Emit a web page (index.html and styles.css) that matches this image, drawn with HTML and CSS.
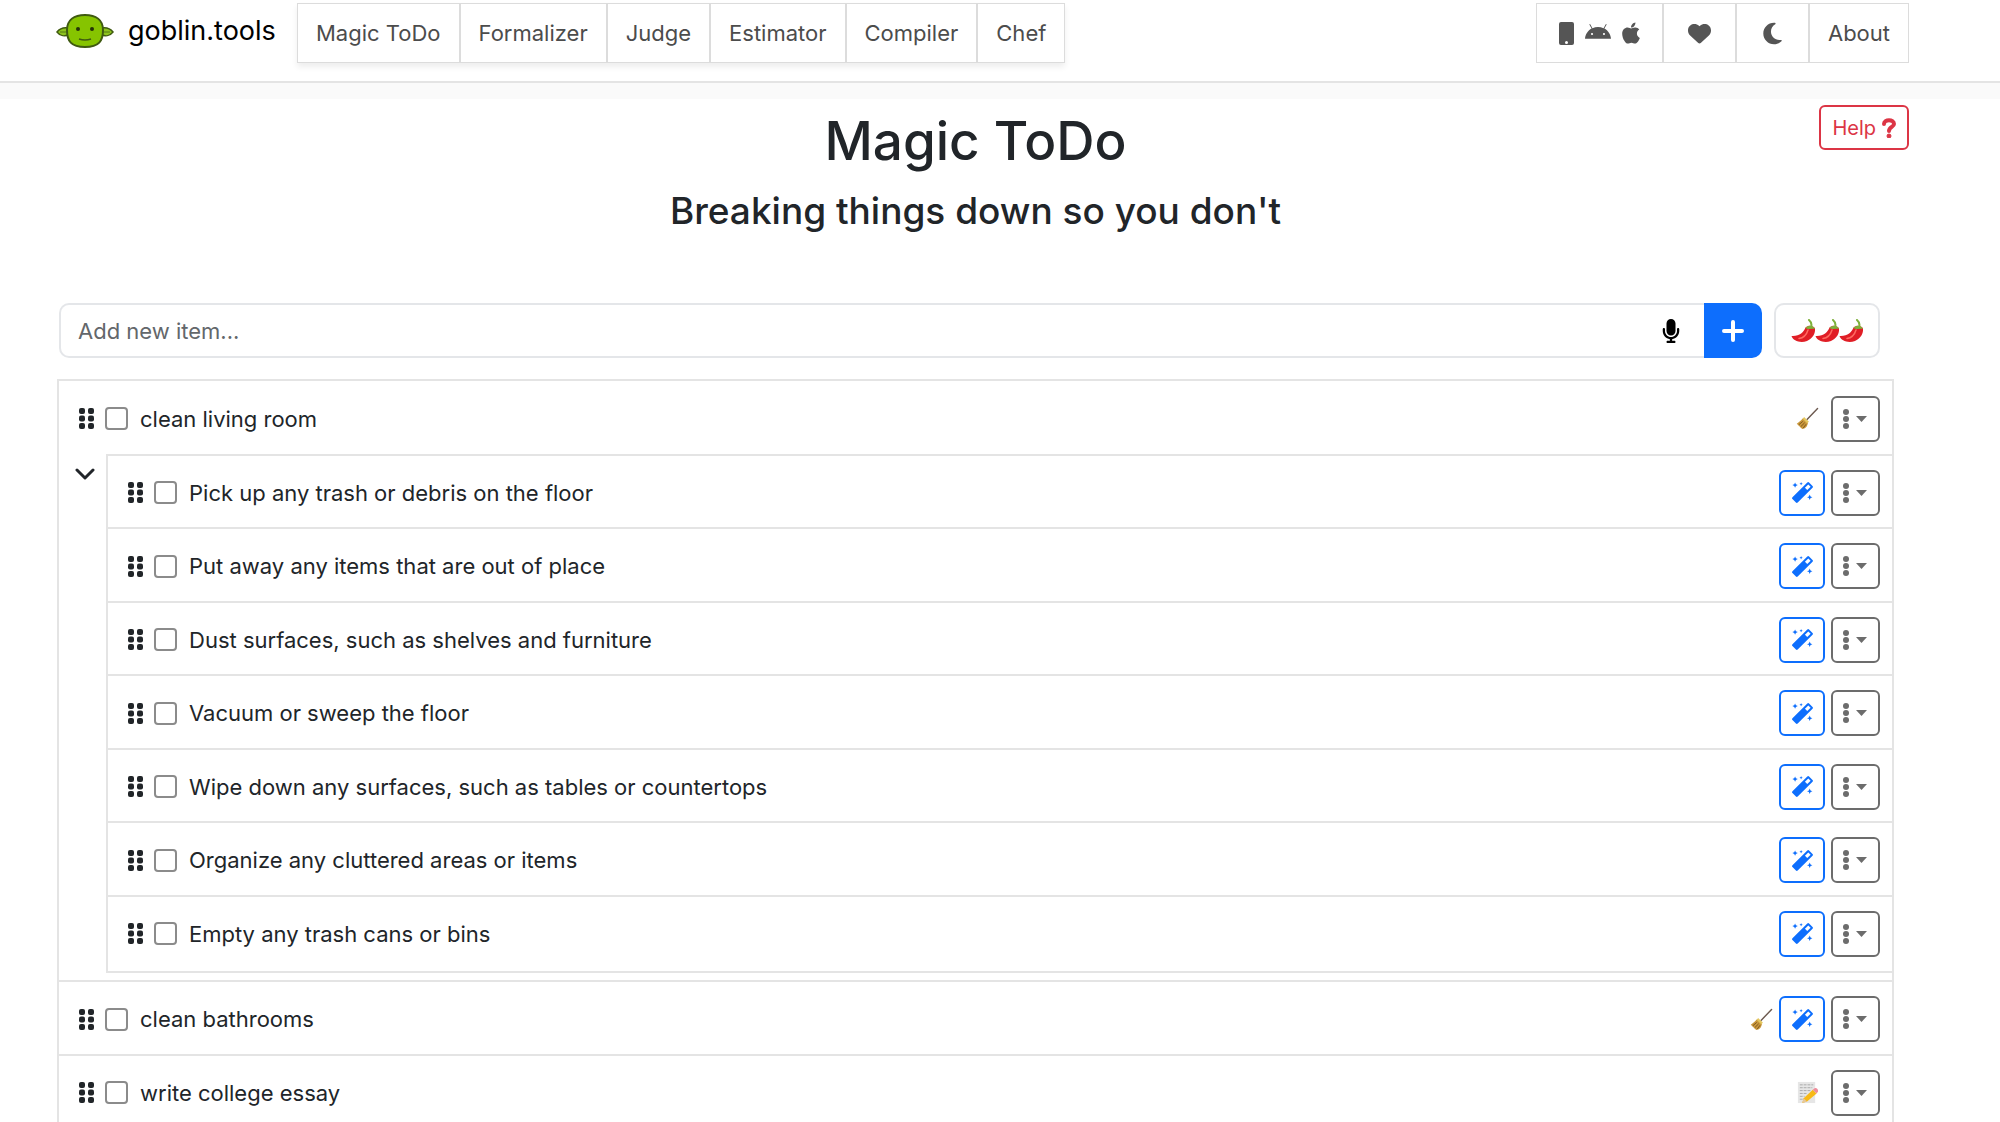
FILE: index.html
```
<!DOCTYPE html>
<html lang="en">
<head>
	<meta charset="utf-8">
	<title>Magic ToDo</title>
	<link rel="stylesheet" href="styles.css">
</head>
<body>
	<!-- shared icons -->
	<svg class="sprite" aria-hidden="true">
		<symbol id="i-grip" viewBox="0 0 15 21">
			<rect x="0" y="0" width="6" height="6" rx="2"/><rect x="9" y="0" width="6" height="6" rx="2"/>
			<rect x="0" y="7.500" width="6" height="6" rx="2"/><rect x="9" y="7.500" width="6" height="6" rx="2"/>
			<rect x="0" y="15" width="6" height="6" rx="2"/><rect x="9" y="15" width="6" height="6" rx="2"/>
		</symbol>
		<symbol id="i-wand" viewBox="0 0 512 512">
			<path transform="rotate(-45 256 256)" fill-rule="evenodd" d="M0 166H512a30 30 0 0 1 30 30V316a30 30 0 0 1-30 30H0a30 30 0 0 1-30-30V196a30 30 0 0 1 30-30zM380 216V296H496V216z"/>
			<path d="M75 10l20 46 46 20-46 20-20 46-20-46-46-20 46-20zM222 0l12 28 28 12-28 12-12 28-12-28-28-12 28-12zM432 306l20 46 46 20-46 20-20 46-20-46-46-20 46-20z"/>
		</symbol>
		<symbol id="i-menu" viewBox="0 0 25 22">
			<circle cx="3" cy="4" r="3"/><circle cx="3" cy="11" r="3"/><circle cx="3" cy="18" r="3"/>
			<path d="M13 8h11l-5.500 6z"/>
		</symbol>
		<symbol id="i-broom" viewBox="0 0 24 24">
			<path d="M22.500 1.500L11.500 13" stroke="#6d5a50" stroke-width="1.500" stroke-linecap="round"/>
			<path d="M7.500 11.500l5 5c-.5 4-3 6.500-6 6.500L.8 17.500c1.700-1 4-3 6.700-6z" fill="#c9973a"/>
			<path d="M8.500 10.500l5 5-1.800 1.500-4.700-4.700z" fill="#e4c75f"/>
			<path d="M3 18.500l4-3.500M5 20.500l4-4M7.500 22l3-4" stroke="#7b5520" stroke-width="1"/>
		</symbol>
		<symbol id="i-memo" viewBox="0 0 24 24">
			<path d="M2 1h18v22H2z" fill="#e6e6e6"/>
			<path d="M4 4h14M4 7h13M4 10h11M4 13h7M4 16h5M4 19h4" stroke="#a9a9a9" stroke-width="1" stroke-dasharray="3 1"/>
			<path d="M17.500 9l4 4-10 8.500-5 1.500 1.500-5z" fill="#f7b916"/>
			<path d="M8 18l3.500 3.500-5 1.500z" fill="#e5c79b"/>
			<path d="M17.500 9l2-1.500c2-.5 4 1.500 3.500 3.500l-1.500 2z" fill="#ef8d9b"/>
		</symbol>
		<symbol id="i-chili" viewBox="0 0 24 24">
			<path d="M14.500 8.500c-2 5-6 9-14 8.500 1.500 5 9 7.500 15.500 5 6-2.500 8.500-8 8-12.500-1.500-2.500-6-4-9.500-1z" fill="#e01e26"/>
			<path d="M17 11c-1.500 5-5 8-9 8.500" stroke="#ff6b61" stroke-width="1.500" fill="none" stroke-linecap="round"/>
			<path d="M14.500 9c2-3 7-3.500 9.500.5-2 .8-3 0-4 .3-1.500.5-4 0-5.500-.8z" fill="#7eb13b"/>
			<path d="M20 8.500c1-3 1-5-2-7.500" stroke="#7eb13b" stroke-width="2" fill="none" stroke-linecap="round"/>
		</symbol>
	</svg>

	<header class="topbar">
		<a class="brand" href="#">
			<svg class="logo" viewBox="0 0 58 34" aria-hidden="true">
				<path d="M13 14C8 13 4 14 1 18c3 4 8 5 13 2zM45 14c5-1 9 0 12 4-3 4-8 5-13 2z" fill="#8dc41e" stroke="#3f5a10" stroke-width="1.500"/>
				<path d="M4 18h8M54 18h-8" stroke="#557a12" stroke-width="1"/>
				<path d="M29 1c11 0 18 5 18 15 0 11-4 17-18 17S11 27 11 16C11 6 18 1 29 1z" fill="#86c400" stroke="#3f5a10" stroke-width="2"/>
				<circle cx="22" cy="15" r="2" fill="#263408"/><circle cx="36" cy="15" r="2" fill="#263408"/>
				<path d="M23 25q6 2 12 0" stroke="#3f5a10" stroke-width="1.500" fill="none"/>
			</svg>
			<span>goblin.tools</span>
		</a>
		<nav class="tabs tabs-main">
			<a href="#">Magic ToDo</a>
			<a href="#">Formalizer</a>
			<a href="#">Judge</a>
			<a href="#">Estimator</a>
			<a href="#">Compiler</a>
			<a href="#">Chef</a>
		</nav>
		<nav class="tabs tabs-side">
			<a href="#" class="apps" aria-label="Mobile apps">
				<svg class="icon-phone" viewBox="0 0 15 23"><path fill-rule="evenodd" d="M2 0h11a2 2 0 0 1 2 2v19a2 2 0 0 1-2 2H2a2 2 0 0 1-2-2V2a2 2 0 0 1 2-2zm5.500 19a1.500 1.500 0 1 0 0 3 1.500 1.500 0 0 0 0-3z"/></svg>
				<svg class="icon-android" viewBox="0 0 576 512"><path d="M420.550,301.930a24,24,0,1,1,24-24,24,24,0,0,1-24,24m-265.100,0a24,24,0,1,1,24-24,24,24,0,0,1-24,24m273.700-144.480,47.940-83a10,10,0,1,0-17.270-10h0l-48.540,84.070a301.250,301.250,0,0,0-246.560,0L116.180,64.450a10,10,0,1,0-17.270,10h0l47.940,83C64.530,202.220,8.240,285.550,0,384H576c-8.240-98.450-64.540-181.780-146.850-226.550"/></svg>
				<svg class="icon-apple" viewBox="0 0 384 512"><path d="M318.700 268.700c-.2-36.700 16.400-64.400 50-84.800-18.800-26.900-47.200-41.700-84.700-44.600-35.500-2.800-74.300 20.700-88.500 20.700-15 0-49.400-19.700-76.400-19.700C63.300 141.200 4 184.800 4 273.500q0 39.300 14.400 81.200c12.800 36.700 59 126.700 107.200 125.200 25.200-.6 43-17.900 75.800-17.900 31.800 0 48.300 17.900 76.400 17.900 48.600-.7 90.400-82.500 102.600-119.300-65.200-30.700-61.700-90-61.700-91.900zm-56.600-164.200c27.300-32.400 24.800-61.900 24-72.500-24.100 1.400-52 16.400-67.900 34.900-17.500 19.800-27.800 44.300-25.600 71.900 26.100 2 49.900-11.400 69.500-34.300z"/></svg>
			</a>
			<a href="#" class="single" aria-label="Support">
				<svg class="icon" viewBox="0 0 512 512"><path d="M47.600 300.400L228.300 469.100c7.500 7 17.400 10.900 27.700 10.900s20.200-3.900 27.700-10.900L464.400 300.400c30.400-28.300 47.600-68 47.600-109.500v-5.800c0-69.900-50.500-129.500-119.400-141C347 36.500 300.600 51.400 268 84L256 96 244 84c-32.600-32.600-79-47.500-124.600-39.900C50.500 55.600 0 115.200 0 185.100v5.800c0 41.500 17.200 81.200 47.600 109.500z"/></svg>
			</a>
			<a href="#" class="single" aria-label="Dark mode">
				<svg class="icon" viewBox="-48 16 480 480"><path d="M223.500 32C100 32 0 132.300 0 256S100 480 223.500 480c60.600 0 115.500-24.200 155.800-63.400c5-4.900 6.300-12.500 3.100-18.700s-10.100-9.700-17-8.500c-9.800 1.700-19.800 2.600-30.100 2.600c-96.900 0-175.500-78.800-175.500-176c0-65.800 36-123.100 89.300-153.300c6.100-3.500 9.200-10.500 7.700-17.300s-7.300-11.900-14.300-12.500c-6.300-.5-12.600-.8-19-.8z"/></svg>
			</a>
			<a href="#">About</a>
		</nav>
	</header>

	<main class="page">
		<div class="heading">
			<h1>Magic ToDo</h1>
			<h2>Breaking things down so you don't</h2>
			<button class="help" type="button">Help
				<svg viewBox="0 0 14 20" aria-hidden="true"><path d="M2 6c0-5 10-5 10 0 0 3-5 3-5 7" fill="none" stroke="currentColor" stroke-width="4" stroke-linecap="round"/><circle cx="7" cy="18" r="2" fill="currentColor" stroke="currentColor"/></svg>
			</button>
		</div>

		<form class="add-row">
			<div class="add-box">
				<input type="text" placeholder="Add new item..." aria-label="Add new item">
				<button class="mic" type="button" aria-label="Dictate">
					<svg viewBox="0 0 384 512"><path d="M192 0C139 0 96 43 96 96V256c0 53 43 96 96 96s96-43 96-96V96c0-53-43-96-96-96zM64 216c0-13.300-10.700-24-24-24s-24 10.700-24 24v40c0 89.100 66.200 162.700 152 174.400V464H120c-13.300 0-24 10.700-24 24s10.700 24 24 24h72 72c13.300 0 24-10.700 24-24s-10.700-24-24-24H216V430.400c85.800-11.700 152-85.300 152-174.400V216c0-13.300-10.700-24-24-24s-24 10.700-24 24v40c0 70.700-57.300 128-128 128s-128-57.300-128-128V216z"/></svg>
				</button>
			</div>
			<button class="plus" type="button" aria-label="Add">
				<svg viewBox="0 0 22 22"><path d="M11 2v18M2 11h18" stroke="#fff" stroke-width="4" stroke-linecap="round"/></svg>
			</button>
			<button class="spice" type="button" aria-label="Spiciness level">
				<svg><use href="#i-chili"/></svg><svg><use href="#i-chili"/></svg><svg><use href="#i-chili"/></svg>
			</button>
		</form>

		<ul class="list">
			<li>
				<div class="item item-open">
					<svg class="grip"><use href="#i-grip"/></svg>
					<input type="checkbox" id="t1"><label for="t1">clean living room</label>
					<svg class="tag"><use href="#i-broom"/></svg>
					<button class="menu" type="button" aria-label="Options"><svg><use href="#i-menu"/></svg></button>
				</div>
				<div class="children">
					<button class="fold" type="button" aria-label="Collapse">
						<svg viewBox="0 0 20 13"><path d="M2 2l8 8 8-8" fill="none" stroke="#212529" stroke-width="3" stroke-linecap="round" stroke-linejoin="round"/></svg>
					</button>
					<ul class="sublist">
						<li class="item">
							<svg class="grip"><use href="#i-grip"/></svg>
							<input type="checkbox" id="s1"><label for="s1">Pick up any trash or debris on the floor</label>
							<button class="magic" type="button" aria-label="Break down"><svg><use href="#i-wand"/></svg></button>
							<button class="menu" type="button" aria-label="Options"><svg><use href="#i-menu"/></svg></button>
						</li>
						<li class="item">
							<svg class="grip"><use href="#i-grip"/></svg>
							<input type="checkbox" id="s2"><label for="s2">Put away any items that are out of place</label>
							<button class="magic" type="button" aria-label="Break down"><svg><use href="#i-wand"/></svg></button>
							<button class="menu" type="button" aria-label="Options"><svg><use href="#i-menu"/></svg></button>
						</li>
						<li class="item">
							<svg class="grip"><use href="#i-grip"/></svg>
							<input type="checkbox" id="s3"><label for="s3">Dust surfaces, such as shelves and furniture</label>
							<button class="magic" type="button" aria-label="Break down"><svg><use href="#i-wand"/></svg></button>
							<button class="menu" type="button" aria-label="Options"><svg><use href="#i-menu"/></svg></button>
						</li>
						<li class="item">
							<svg class="grip"><use href="#i-grip"/></svg>
							<input type="checkbox" id="s4"><label for="s4">Vacuum or sweep the floor</label>
							<button class="magic" type="button" aria-label="Break down"><svg><use href="#i-wand"/></svg></button>
							<button class="menu" type="button" aria-label="Options"><svg><use href="#i-menu"/></svg></button>
						</li>
						<li class="item">
							<svg class="grip"><use href="#i-grip"/></svg>
							<input type="checkbox" id="s5"><label for="s5">Wipe down any surfaces, such as tables or countertops</label>
							<button class="magic" type="button" aria-label="Break down"><svg><use href="#i-wand"/></svg></button>
							<button class="menu" type="button" aria-label="Options"><svg><use href="#i-menu"/></svg></button>
						</li>
						<li class="item">
							<svg class="grip"><use href="#i-grip"/></svg>
							<input type="checkbox" id="s6"><label for="s6">Organize any cluttered areas or items</label>
							<button class="magic" type="button" aria-label="Break down"><svg><use href="#i-wand"/></svg></button>
							<button class="menu" type="button" aria-label="Options"><svg><use href="#i-menu"/></svg></button>
						</li>
						<li class="item">
							<svg class="grip"><use href="#i-grip"/></svg>
							<input type="checkbox" id="s7"><label for="s7">Empty any trash cans or bins</label>
							<button class="magic" type="button" aria-label="Break down"><svg><use href="#i-wand"/></svg></button>
							<button class="menu" type="button" aria-label="Options"><svg><use href="#i-menu"/></svg></button>
						</li>
					</ul>
				</div>
			</li>
			<li class="item">
				<svg class="grip"><use href="#i-grip"/></svg>
				<input type="checkbox" id="t2"><label for="t2">clean bathrooms</label>
				<svg class="tag"><use href="#i-broom"/></svg>
				<button class="magic" type="button" aria-label="Break down"><svg><use href="#i-wand"/></svg></button>
				<button class="menu" type="button" aria-label="Options"><svg><use href="#i-menu"/></svg></button>
			</li>
			<li class="item">
				<svg class="grip"><use href="#i-grip"/></svg>
				<input type="checkbox" id="t3"><label for="t3">write college essay</label>
				<svg class="tag"><use href="#i-memo"/></svg>
				<button class="menu" type="button" aria-label="Options"><svg><use href="#i-menu"/></svg></button>
			</li>
		</ul>
	</main>
</body>
</html>
```
FILE: styles.css
```
* {
	box-sizing: border-box;
}
body {
	margin: 0;
	font-family: Inter, "Liberation Sans", sans-serif;
	font-size: 22px;
	line-height: 36px;
	color: #212529;
	background-color: #fff;
	overflow: hidden;
}
a {
	color: inherit;
	text-decoration: none;
}
button, input {
	font: inherit;
	color: inherit;
	margin: 0;
}
button {
	display: flex;
	align-items: center;
	justify-content: center;
	padding: 0;
	background: none;
	border: none;
	cursor: pointer;
}
ul {
	list-style: none;
	margin: 0;
	padding: 0;
}
svg {
	flex: none;
}
.sprite {
	display: none;
}

/* top bar */
.topbar {
	display: flex;
	align-items: flex-start;
	padding: 3px 91px 17px 56px;
	border-bottom: 2px solid #e4e4e4;
	box-shadow: 0 16px 0 #fafafa;
}
.brand {
	display: flex;
	align-items: center;
	gap: 14px;
	width: 241px;
	height: 56px;
	font-size: 27px;
	color: #000;
}
.logo {
	width: 58px;
	height: 34px;
}
.tabs {
	display: flex;
	margin-bottom: 1px;
	border: 1px solid #dcdcdc;
	color: #4c4c4c;
	fill: #555;
}
.tabs a {
	display: flex;
	align-items: center;
	justify-content: center;
	height: 58px;
	padding: 0 18px;
}
.tabs a + a {
	border-left: 2px solid #dcdcdc;
}
.tabs-main {
	box-shadow: 0 4px 6px #eee;
}
.tabs-side {
	margin-left: auto;
}
.tabs .apps {
	gap: 11px;
	padding: 0 22px;
}
.tabs .single {
	padding: 0 24px;
}
.icon {
	width: 23px;
	height: 23px;
}
.icon-phone {
	width: 15px;
	height: 23px;
}
.icon-android {
	width: 26px;
	height: 24px;
}
.icon-apple {
	width: 18px;
	height: 24px;
}

/* heading */
.page {
	padding: 22px 91px 0 42px;
}
.heading {
	position: relative;
	text-align: center;
}
h1, h2 {
	margin: 0;
	font-weight: 500;
}
h1 {
	font-size: 53px;
	line-height: 72px;
}
h2 {
	font-size: 37px;
	line-height: 48px;
	padding-top: 10px;
}
.help {
	position: absolute;
	top: 0;
	right: 0;
	gap: 6px;
	height: 45px;
	padding: 0 11px;
	font-size: 20px;
	color: #dc3545;
	border: 2px solid #dc3545;
	border-radius: 6px;
}
.help svg {
	width: 14px;
	height: 20px;
}

/* new item */
.add-row {
	display: flex;
	padding: 68px 29px 0 17px;
}
.add-box {
	display: flex;
	flex: 1;
	height: 55px;
	border: 2px solid #e4e6e9;
	border-right: none;
	border-radius: 10px 0 0 10px;
}
.add-box input {
	flex: 1;
	padding: 0 17px;
	border: none;
	background: none;
	outline: none;
}
.add-box input::placeholder {
	color: #63676b;
	opacity: 1;
}
.mic {
	width: 66px;
}
.mic svg {
	width: 18px;
	height: 24px;
}
.plus {
	width: 58px;
	height: 55px;
	background-color: #0d6efd;
	border-radius: 0 10px 10px 0;
}
.plus svg {
	width: 22px;
	height: 22px;
}
.spice {
	width: 106px;
	height: 55px;
	margin-left: 12px;
	border: 2px solid #e4e6e9;
	border-radius: 10px;
}
.spice svg {
	width: 24px;
	height: 24px;
}

/* todo list */
.list {
	margin: 21px 15px 0;
	border: 2px solid #e4e4e4;
	border-top: none;
}
.item {
	display: flex;
	align-items: center;
	height: 73px;
	padding: 2px 12px 0 20px;
	border-top: 2px solid #e4e4e4;
}
.item:nth-child(even) {
	height: 74px;
}
.item-open {
	height: 75px;
}
.sublist .item:last-child {
	height: 76px;
	padding-bottom: 3px;
}
.grip {
	width: 15px;
	height: 21px;
	margin-right: 11px;
	fill: #212529;
}
.item input {
	appearance: none;
	flex: none;
	width: 23px;
	height: 23px;
	margin-right: 12px;
	border: 2px solid #8b8b8b;
	border-radius: 4px;
}
.item label {
	flex: 1;
}
.tag {
	width: 23px;
	height: 23px;
}
.magic, .menu {
	height: 46px;
	margin-left: 6px;
	border: 2px solid #6c6c6c;
	border-radius: 6px;
}
.menu {
	width: 49px;
	fill: #6c6c6c;
}
.menu svg {
	width: 25px;
	height: 22px;
}
.magic {
	width: 46px;
	fill: #0d6efd;
	border-color: #0d6efd;
}
.magic svg {
	width: 21px;
	height: 21px;
}
.tag + .menu {
	margin-left: 12px;
}
.children {
	display: flex;
	align-items: flex-start;
	padding-bottom: 7px;
}
.fold {
	width: 47px;
	height: 40px;
	padding-left: 4px;
}
.fold svg {
	width: 20px;
	height: 13px;
}
.sublist {
	flex: 1;
	border-left: 2px solid #e4e4e4;
	border-bottom: 2px solid #e4e4e4;
}
```
